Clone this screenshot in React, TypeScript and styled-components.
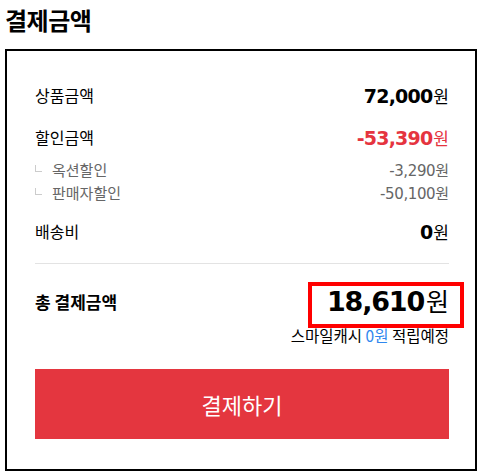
import styled, { createGlobalStyle } from "styled-components"

const GlobalStyle = createGlobalStyle`
  body {
    margin: 0;
    background: #fff;
    font-family: "Noto Sans CJK KR", "Noto Sans", sans-serif;
    color: #000;
  }
`

const NUM_FONT = `"DejaVu Sans", "Noto Sans CJK KR", sans-serif`

type Line = { label: string; amount: string; red?: boolean }

const discounts = [
  { label: "옥션할인", amount: "-3,290" },
  { label: "판매자할인", amount: "-50,100" },
]

export default function App() {
  const mainRows: Line[] = [
    { label: "상품금액", amount: "72,000" },
    { label: "할인금액", amount: "-53,390", red: true },
  ]

  return (
    <Page>
      <GlobalStyle />
      <Title>결제금액</Title>
      <Box>
        {mainRows.map(row => (
          <Row key={row.label}>
            <Label>{row.label}</Label>
            <Amount $red={row.red}>
              <b>{row.amount}</b>원
            </Amount>
          </Row>
        ))}
        <SubList>
          {discounts.map(d => (
            <SubRow key={d.label}>
              <SubLabel>
                <Corner />
                {d.label}
              </SubLabel>
              <SubAmount>
                <span>{d.amount}</span>원
              </SubAmount>
            </SubRow>
          ))}
        </SubList>
        <Row>
          <Label>배송비</Label>
          <Amount>
            <b>0</b>원
          </Amount>
        </Row>
        <Divider />
        <TotalRow>
          <TotalLabel>총 결제금액</TotalLabel>
          <TotalAmount>
            <b>18,610</b>원
          </TotalAmount>
        </TotalRow>
        <Cash>
          스마일캐시 <CashValue>0원</CashValue> 적립예정
        </Cash>
        <PayButton type="button">결제하기</PayButton>
      </Box>
    </Page>
  )
}

const Page = styled.div`
  padding: 0 5px;
  width: 472px;
`

const Title = styled.h2`
  margin: 4px 0 13px 0;
  font-size: 24px;
  line-height: 32px;
  font-weight: 700;
  letter-spacing: -0.5px;
`

const Box = styled.section`
  border: 2px solid #000;
  padding: 23px 26px 30px 28px;
  display: flex;
  flex-direction: column;
`

const Row = styled.div`
  display: flex;
  justify-content: space-between;
  align-items: center;
  height: 42px;
`

const Label = styled.span`
  font-size: 16px;
`

const Amount = styled.span<{ $red?: boolean }>`
  font-size: 17px;
  color: ${p => (p.$red ? "#e5343f" : "#000")};

  b {
    font-family: ${NUM_FONT};
    font-size: 19px;
    font-weight: 700;
    letter-spacing: -0.8px;
    margin-right: 1px;
  }
`

const SubList = styled.div`
  display: flex;
  flex-direction: column;
  padding-bottom: 6px;
`

const SubRow = styled.div`
  display: flex;
  justify-content: space-between;
  align-items: center;
  height: 23px;
  color: #666;
  font-size: 15px;
`

const SubLabel = styled.span`
  display: flex;
  align-items: center;
  gap: 10px;
`

const Corner = styled.i`
  display: inline-block;
  width: 6px;
  height: 6px;
  margin-top: -2px;
  border-left: 1px solid #ccc;
  border-bottom: 1px solid #ccc;
`

const SubAmount = styled.span`
  font-size: 15px;

  span {
    font-family: ${NUM_FONT};
    font-size: 15px;
    letter-spacing: -0.4px;
  }
`

const Divider = styled.hr`
  margin: 11px 0 0;
  border: 0;
  border-top: 1px solid #e3e3e3;
`

const TotalRow = styled.div`
  display: flex;
  justify-content: space-between;
  align-items: center;
  height: 44px;
  margin-top: 15px;
`

const TotalLabel = styled.span`
  font-size: 17px;
  font-weight: 700;
`

const TotalAmount = styled.span`
  position: relative;
  font-size: 25px;
  line-height: 44px;

  b {
    font-family: ${NUM_FONT};
    font-size: 27px;
    font-weight: 700;
    letter-spacing: -1.2px;
    margin-right: 2px;
  }

  &::after {
    content: "";
    position: absolute;
    top: 4px;
    bottom: -4px;
    left: -19px;
    right: -15px;
    border: 4px solid #ff0000;
  }
`

const Cash = styled.div`
  margin-top: 3px;
  text-align: right;
  font-size: 15.5px;
  line-height: 18px;
`

const CashValue = styled.span`
  color: #2f87ee;
`

const PayButton = styled.button`
  margin-top: 25px;
  height: 70px;
  border: 0;
  background: #e4363f;
  color: #fff;
  font-family: "Noto Sans CJK KR", sans-serif;
  font-size: 22px;
  cursor: pointer;
`
